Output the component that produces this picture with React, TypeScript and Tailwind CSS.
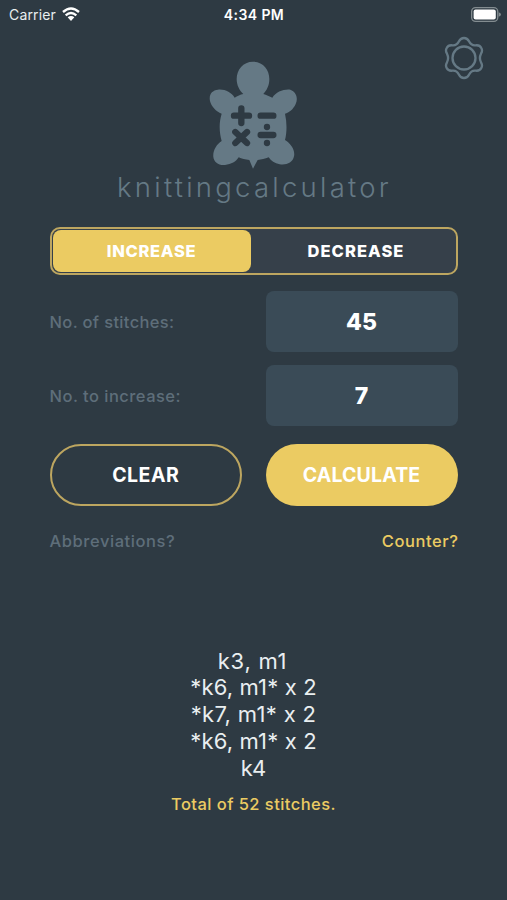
import type { ReactNode } from "react";

function Turtle() {
  return (
    <svg viewBox="0 0 390 390" className="h-[130px] w-[130px]" aria-hidden="true">
      <g fill="#657985">
        <path d="M189 35 C219 35 238 59 238 87 C238 107 230 121 220 132 C229 135 239 139 247 143 C258 126 280 117 301 119 C319 125 325 145 317 162 C310 178 297 188 285 191 C291 218 291 246 285 270 C303 281 316 300 312 319 C308 339 289 346 269 343 C254 341 243 332 236 322 C225 327 214 329 203 330 L189 356 L178 330 C166 329 155 326 146 322 C138 335 124 343 105 345 C86 347 72 337 70 321 C68 301 80 283 95 273 C87 245 87 217 95 191 C78 185 64 169 60 153 C56 133 66 121 84 119 C105 117 124 127 134 143 C142 138 151 134 160 132 C148 121 140 105 140 87 C140 59 159 35 189 35Z" />
      </g>
      <g stroke="#2e3a43" strokeWidth="19" strokeLinecap="round">
        <path d="M132 197H177M154 175V219M212 197H250M212 255H250M136 246L171 279M171 246L136 279" />
      </g>
      <g fill="#2e3a43">
        <circle cx="231" cy="231" r="9.5" />
        <circle cx="231" cy="279" r="9.5" />
      </g>
    </svg>
  );
}

function Gear() {
  return (
    <svg viewBox="0 0 120 132" className="h-[44px] w-[40px]" fill="none" stroke="#657985" strokeWidth="7" strokeLinejoin="round" aria-hidden="true">
      <circle cx="60" cy="66" r="34.5" />
      <path d="M60 6 C68 6 72 10 75 16 C79 24 86 29 95 28 C104 27 109 30 112 36 C116 43 114 48 111 53 C107 61 107 71 111 79 C114 84 116 89 112 96 C109 102 104 105 95 104 C86 103 79 108 75 116 C72 122 68 126 60 126 C52 126 48 122 45 116 C41 108 34 103 25 104 C16 105 11 102 8 96 C4 89 6 84 9 79 C13 71 13 61 9 53 C6 48 4 43 8 36 C11 30 16 27 25 28 C34 29 41 24 45 16 C48 10 52 6 60 6Z" />
    </svg>
  );
}

function StatusBar() {
  return (
    <header className="grid h-7 grid-cols-3 items-center pr-[6px] pl-[9px] text-[14px] text-[#e9eef0]">
      <div className="flex items-center gap-[6px]">
        <span className="tracking-[0.15px]">Carrier</span>
        <svg viewBox="0 0 54 42" className="h-[14px] w-[18px]" aria-hidden="true">
          <g fill="none" stroke="#fff" strokeWidth="7">
            <path d="M3 15 Q27 -6 51 15" />
            <path d="M11 25 Q27 11 43 25" />
          </g>
          <path d="M17 31 Q27 23 37 31 L27 42Z" fill="#fff" />
        </svg>
      </div>
      <span className="-ml-[2px] text-center text-[14px] font-semibold tracking-[0.4px] text-white">4:34 PM</span>
      <svg viewBox="0 0 92 46" className="h-[15px] w-[30px] justify-self-end" aria-hidden="true">
        <rect x="2" y="2" width="80" height="42" rx="12" fill="none" stroke="#838c90" strokeWidth="4" />
        <rect x="8" y="8" width="68" height="30" rx="6" fill="#fff" />
        <path d="M85 16 Q92 19 92 23 Q92 27 85 30Z" fill="#838c90" />
      </svg>
    </header>
  );
}

function Field({ label, value }: { label: ReactNode; value: string }) {
  return (
    <div className="flex items-center justify-between">
      {label}
      <div className="flex h-[61px] w-[192px] items-center justify-center rounded-[8px] bg-[#3a4b57] pt-[2px] text-[23px] font-extrabold text-white">
        {value}
      </div>
    </div>
  );
}

export default function App() {
  return (
    <main className="flex h-[900px] w-[507px] flex-col overflow-hidden bg-[#2e3a43] font-['Inter',sans-serif] whitespace-nowrap">
      <StatusBar />
      <div className="grid h-[152px] grid-cols-[1fr_130px_1fr] px-[23px] pt-[8px]">
        <div />
        <div className="ml-[1px] pt-[14px]"><Turtle /></div>
        <div className="flex justify-end"><Gear /></div>
      </div>
      <h1 className="-mt-[11px] flex h-[38px] items-center justify-center text-[27.5px] font-light text-[#657985]">
        <span className="-mr-[2px] tracking-[3.25px]">knittingcalculator</span>
      </h1>
      <div className="mx-[49.5px] mt-[20px] flex h-[48px] rounded-[10px] border-2 border-[#bda660] bg-[#36404a] p-[1px] text-[16.5px] font-extrabold tracking-[0.7px] text-white">
        <div className="flex w-[198px] items-center justify-center rounded-[8px] bg-[#ebcb62]"><span>INCREASE</span></div>
        <div className="flex flex-1 items-center justify-center"><span className="ml-[7px] tracking-[1.05px]">DECREASE</span></div>
      </div>
      <section className="mx-[49.5px] mt-[16px] flex flex-col gap-[13px]">
        <Field label={<span className="pt-[2px] text-[16.5px] font-medium tracking-[0.34px] text-[#5e6e7a]">No. of stitches:</span>} value="45" />
        <Field label={<span className="pt-[2px] text-[16.5px] font-medium tracking-[0.47px] text-[#5e6e7a]">No. to increase:</span>} value="7" />
      </section>
      <div className="mx-[49.5px] mt-[18px] flex justify-between text-[19.5px] font-bold text-white">
        <div className="flex h-[62px] w-[192.5px] items-center justify-center rounded-full border-2 border-[#bda660] pt-[2px]"><span className="tracking-[0.5px]">CLEAR</span></div>
        <div className="flex h-[62px] w-[192px] items-center justify-center rounded-full bg-[#ebcb62] pt-[2px]"><span className="tracking-[0.15px]">CALCULATE</span></div>
      </div>
      <div className="mx-[49.5px] mt-[23px] flex h-[24px] items-center justify-between text-[16.5px] font-medium tracking-[0.57px]">
        <span className="text-[#5e6e7a]">Abbreviations?</span>
        <span className="-mr-[1px] text-[#ebcb62]">Counter?</span>
      </div>
      <section className="mt-[94.5px] flex flex-col items-center text-[22px] leading-[26.8px] text-[#e9eef0]">
        <p className="-ml-[2px] tracking-[0.75px]">k3, m1</p>
        <p className="tracking-[0.15px]">*k6, m1* x 2</p>
        <p className="tracking-[0.35px]">*k7, m1* x 2</p>
        <p className="tracking-[0.15px]">*k6, m1* x 2</p>
        <p>k4</p>
      </section>
      <p className="mt-[10.5px] text-center text-[16.5px] leading-[24px] font-medium tracking-[0.45px] text-[#ebcb62]">Total of 52 stitches.</p>
    </main>
  );
}
